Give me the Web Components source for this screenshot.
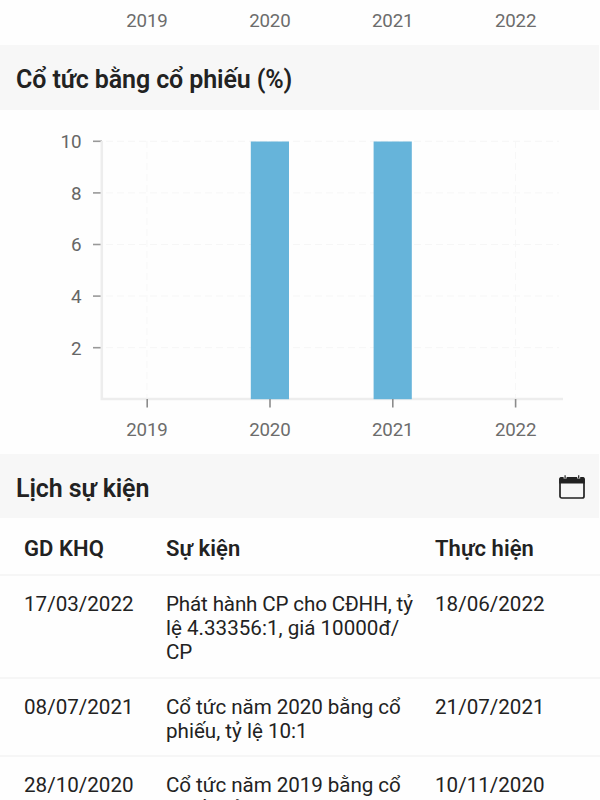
<!DOCTYPE html>
<html lang="vi">
<head>
<meta charset="utf-8">
<title>Cổ tức</title>
<style>
html,body{margin:0;height:800px;overflow:hidden;background:#fefefe}
body{font-family:Roboto,"Noto Sans",sans-serif;color:#222}
</style>
</head>
<body>
<stock-page></stock-page>
<script>
class YearAxis extends HTMLElement{
  connectedCallback(){
    this.attachShadow({mode:'open'}).innerHTML=`<style>
    :host{display:grid;grid-template-columns:repeat(4,122.9px);padding-left:85.5px;height:24px;line-height:24px;font-size:18.7px;color:#6c6c6c;text-align:center;letter-spacing:-.15px}
    </style><span>2019</span><span>2020</span><span>2021</span><span>2022</span>`;
  }
}
customElements.define('year-axis',YearAxis);

class SectionBar extends HTMLElement{
  connectedCallback(){
    this.attachShadow({mode:'open'}).innerHTML=`<style>
    :host{display:flex;align-items:center;justify-content:space-between;box-sizing:border-box;height:65px;padding:3px 14px 0 16px;background:#f7f7f7;border-right:1px solid #fefefe}
    h2{margin:2px 0 0;font-size:25px;line-height:32px;font-weight:600;letter-spacing:-.11px;white-space:nowrap}
    </style><h2><slot></slot></h2><slot name="action"></slot>`;
  }
}
customElements.define('section-bar',SectionBar);

class CalendarIcon extends HTMLElement{
  connectedCallback(){
    this.attachShadow({mode:'open'}).innerHTML=`<style>:host{display:block;width:26px;height:25px}svg{display:block}</style>
    <svg width="26" height="25" viewBox="0 0 26 25">
      <rect x="1" y="2.9" width="24" height="20.1" rx="1.8" fill="none" stroke="#222" stroke-width="1.7"/>
      <path d="M.2 8.6V4.2Q.2 2 2.4 2H23.6Q25.8 2 25.8 4.2V8.6Z" fill="#222"/>
      <path d="M6.1 0V3.4M19.7 0V3.4" stroke="#f7f7f7" stroke-width="3"/>
      <path d="M6.1 .3V3.2M19.7 .3V3.2" stroke="#222" stroke-width="1.2"/>
    </svg>`;
  }
}
customElements.define('calendar-icon',CalendarIcon);

class BarChart extends HTMLElement{
  connectedCallback(){
    const values=[0,10,10,0];
    const y=v=>289.5-v*25.8;
    const x=i=>147+i*122.8;
    let s='';
    for(const v of [2,4,6,8,10]){
      const p=y(v)-.2;
      s+=`<path d="M106 ${p}H559" stroke="#f6f6f6" stroke-dasharray="7 4"/><path d="M93 ${p}H102" stroke="#999" stroke-width="1.6"/>
      <text x="81.5" y="${p+6.8}" text-anchor="end">${v}</text>`;
    }
    values.forEach((v,i)=>s+=`<path d="M${x(i)} 31V288" stroke="#f7f7f7" stroke-dasharray="7 4"/>`);
    s+='<path d="M101.8 31V289H563" fill="none" stroke="#ededed" stroke-width="2.6"/>';
    values.forEach((v,i)=>{
      if(v)s+=`<rect x="${x(i)-19}" y="${y(v)}" width="38.2" height="${y(0)-y(v)-.3}" fill="#66b4da"/>`;
      s+=`<path d="M${x(i)+.2} 289V297.5" stroke="#8c8c8c" stroke-width="1.6"/>`;
    });
    this.attachShadow({mode:'open'}).innerHTML=`<style>:host{display:block;height:307px}svg{display:block}text{font-size:18.8px;fill:#666}</style><svg width="600" height="307">${s}</svg>`;
  }
}
customElements.define('bar-chart',BarChart);

class EventRow extends HTMLElement{
  connectedCallback(){
    this.attachShadow({mode:'open'}).innerHTML=`<style>
    :host{display:grid;grid-template-columns:142px 269px 1fr;box-sizing:border-box;height:var(--h);padding:17px 0 0 24px;border-bottom:2px solid #f6f6f6;font-size:20.6px;line-height:23.8px;white-space:nowrap}
    :host(:not([head])) ::slotted(:not([slot])){letter-spacing:-.06px}
    :host([head]){font-weight:600;font-size:22px;padding-top:19px;letter-spacing:.08px}
    </style><slot name="record"></slot><slot></slot><slot name="date"></slot>`;
  }
}
customElements.define('event-row',EventRow);

class StockPage extends HTMLElement{
  connectedCallback(){
    this.attachShadow({mode:'open'}).innerHTML=`<style>
    :host{display:block;width:600px;height:800px;overflow:hidden}
    .top{padding-top:9px;padding-bottom:12px}
    .bottom{padding-top:1px;padding-bottom:12px}
    .last{height:64px}
    .tight{letter-spacing:-.15px}
    .wide{letter-spacing:0}
    </style>
    <year-axis class="top"></year-axis>
    <section-bar>Cổ tức bằng cổ phiếu (%)</section-bar>
    <bar-chart></bar-chart>
    <year-axis class="bottom"></year-axis>
    <section-bar class="last">Lịch sự kiện<calendar-icon slot="action"></calendar-icon></section-bar>
    <event-row head style="--h:58px"><span slot="record">GD KHQ</span><span>Sự kiện</span><span slot="date">Thực hiện</span></event-row>
    <event-row style="--h:103px"><span slot="record">17/03/2022</span><span><span class="tight">Phát hành CP cho CĐHH, tỷ</span><br><span class="wide">lệ 4.33356:1, giá 10000đ/</span><br>CP</span><span slot="date">18/06/2022</span></event-row>
    <event-row style="--h:78px"><span slot="record">08/07/2021</span><span>Cổ tức năm 2020 bằng cổ<br><span class="wide">phiếu, tỷ lệ 10:1</span></span><span slot="date">21/07/2021</span></event-row>
    <event-row style="--h:78px"><span slot="record">28/10/2020</span><span>Cổ tức năm 2019 bằng cổ<br><span class="wide">phiếu, tỷ lệ 10:1</span></span><span slot="date">10/11/2020</span></event-row>`;
  }
}
customElements.define('stock-page',StockPage);
</script>
</body>
</html>
